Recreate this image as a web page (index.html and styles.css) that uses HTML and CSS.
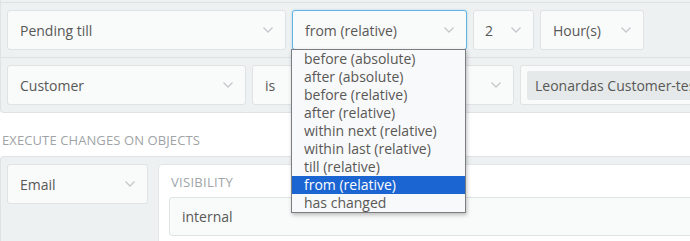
FILE: index.html
```html
<!DOCTYPE html>
<html lang="en">
<head>
    <meta charset="UTF-8">
    <title>Trigger conditions</title>
    <link rel="stylesheet" href="styles.css">
</head>
<body>
    <div class="page">
        <div class="conditions">
            <div class="row-tail"></div>
            <div class="row">
                <div class="select w-attr">Pending till <svg class="chevron" viewBox="0 0 10 6"><polyline points="0.5,0.5 5,5 9.5,0.5"/></svg></div>
                <div class="select w-op focused">from (relative) <svg class="chevron" viewBox="0 0 10 6"><polyline points="0.5,0.5 5,5 9.5,0.5"/></svg></div>
                <div class="select w-num">2 <svg class="chevron" viewBox="0 0 10 6"><polyline points="0.5,0.5 5,5 9.5,0.5"/></svg></div>
                <div class="select w-unit">Hour(s) <svg class="chevron" viewBox="0 0 10 6"><polyline points="0.5,0.5 5,5 9.5,0.5"/></svg></div>
            </div>
            <div class="row">
                <div class="select w-customer">Customer <svg class="chevron" viewBox="0 0 10 6"><polyline points="0.5,0.5 5,5 9.5,0.5"/></svg></div>
                <div class="select w-is">is <svg class="chevron" viewBox="0 0 10 6"><polyline points="0.5,0.5 5,5 9.5,0.5"/></svg></div>
                <div class="select token-field">
                    <span class="token">Leonardas Customer-test</span>
                </div>
            </div>

            <ul class="dropdown">
                <li>before (absolute)</li>
                <li>after (absolute)</li>
                <li>before (relative)</li>
                <li>after (relative)</li>
                <li>within next (relative)</li>
                <li>within last (relative)</li>
                <li>till (relative)</li>
                <li class="active">from (relative)</li>
                <li>has changed</li>
            </ul>
        </div>

        <h4 class="section-label">Execute changes on objects</h4>

        <div class="actions">
            <div class="select w-email">Email <svg class="chevron" viewBox="0 0 10 6"><polyline points="0.5,0.5 5,5 9.5,0.5"/></svg></div>
            <div class="panel">
                <div class="panel-label">Visibility</div>
                <div class="input">internal</div>
            </div>
        </div>
    </div>
</body>
</html>
```

FILE: styles.css
```css
body {
    margin: 0;
    overflow: hidden;
    font-family: "Open Sans", "Noto Sans", sans-serif;
    font-size: 14px;
    color: #585856;
    background: #fff;
}

.page {
    width: 760px;
}

.conditions {
    position: relative;
    background: #edf1f1;
    border-left: 1px solid #dfe3e3;
    border-bottom: 1px solid #dfe3e3;
    border-bottom-left-radius: 4px;
}

.row-tail {
    height: 2px;
}

.row {
    display: flex;
    gap: 6px;
    padding: 7px 6px;
    border-top: 1px solid #dde1e2;
}

.select {
    box-sizing: border-box;
    height: 40px;
    display: flex;
    align-items: center;
    justify-content: space-between;
    padding: 0 12px;
    background: #f9fafa;
    border: 1px solid #dfe3e3;
    border-radius: 3px;
    flex-shrink: 0;
}

.chevron {
    width: 10px;
    height: 6px;
    fill: none;
    stroke: #c4c8ca;
    stroke-width: 1.3;
}

.w-attr { width: 279px; }
.w-op { width: 175px; }
.w-num { width: 61px; padding-left: 11px; }
.w-unit { width: 104px; }
.w-customer { width: 239px; }
.w-is { width: 262px; }
.w-email { width: 141px; }

.focused {
    border-color: #63b4e6;
    box-shadow: 0 0 2px rgba(99, 180, 230, 0.5);
}

.token-field {
    width: 220px;
    padding: 0 6px;
    border-right: none;
    border-top-right-radius: 0;
    border-bottom-right-radius: 0;
}

.token {
    background: #e5e9ea;
    border-radius: 3px;
    padding: 5px 8px;
    white-space: nowrap;
}

/* open native list of the operator select */
.dropdown {
    position: absolute;
    top: 49px;
    left: 290px;
    width: 173px;
    margin: 0;
    padding: 0;
    list-style: none;
    background: #f8f9fa;
    border: 1px solid #7b7d80;
    box-shadow: 1px 2px 4px rgba(0, 0, 0, 0.25);
    font-size: 14px;
    line-height: 18px;
}

.dropdown li {
    height: 18px;
    padding-left: 12px;
    white-space: nowrap;
}

.dropdown li.active {
    background: #1b65d2;
    color: #fff;
}

.section-label {
    margin: 0;
    padding: 18px 0 7px 2px;
    font-size: 13px;
    line-height: 18px;
    font-weight: normal;
    letter-spacing: 0.1px;
    text-transform: uppercase;
    color: #a0a4a6;
}

.actions {
    display: flex;
    align-items: flex-start;
    gap: 10px;
    padding: 7px 6px;
    background: #edf1f1;
    border-left: 1px solid #dfe3e3;
    border-top: 1px solid #dfe3e3;
    border-top-left-radius: 4px;
    height: 80px;
}

.panel {
    flex: 1;
    background: #fff;
    border: 1px solid #e2e6e6;
    border-radius: 4px;
    padding: 8px 10px 10px;
}

.panel-label {
    font-size: 13px;
    line-height: 18px;
    letter-spacing: 0.3px;
    text-transform: uppercase;
    color: #a0a4a6;
    margin: 0 0 6px 2px;
}

.input {
    box-sizing: border-box;
    height: 39px;
    display: flex;
    align-items: center;
    padding: 0 12px;
    background: #f9fafa;
    border: 1px solid #dfe3e3;
    border-radius: 3px;
}
```
